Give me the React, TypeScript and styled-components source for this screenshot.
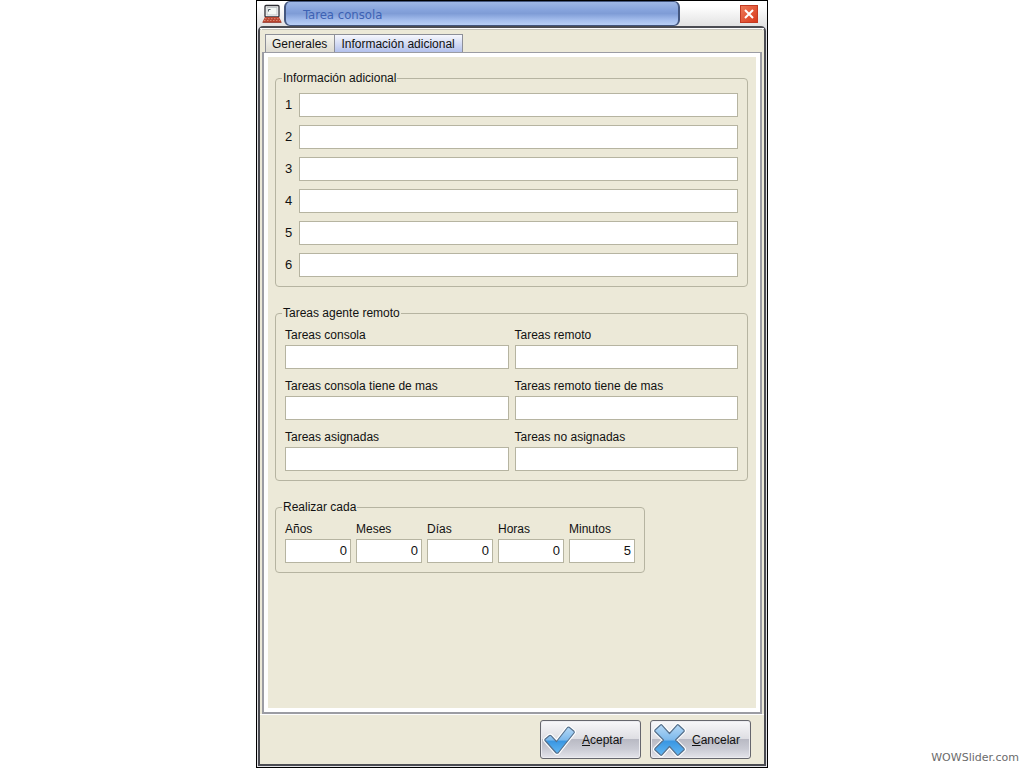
import React, { useState } from 'react';
import styled, { createGlobalStyle } from 'styled-components';

const GlobalStyle = createGlobalStyle`
  *, *::before, *::after { box-sizing: border-box; }
  body {
    margin: 0;
    background: #fff;
    color: #111;
    font: 12px/14px "Liberation Sans", Arial, sans-serif;
  }
  button, input { font: inherit; color: inherit; }
`;

const face = '#ece9d8';
const line = '#b6b4a1';

const Page = styled.div`
  display: grid;
  grid-template-columns: 1fr minmax(512px, 2fr) 1fr;
  min-height: 100vh;
`;

const Dialog = styled.main`
  grid-column: 2;
  display: flex;
  flex-direction: column;
  border: 1px solid #000;
  background: #e2e2e6;
`;

const TitleBar = styled.header`
  display: flex;
  align-items: center;
  height: 25px;
  padding: 0 9px 0 5px;
  background: linear-gradient(#fff 20%, #e2e2e2);
`;

const TitlePill = styled.h1`
  flex: 1;
  height: 25px;
  margin: 0 60px 0 2px;
  padding: 0 17px;
  border: 1px solid #44577f;
  border-width: 1px 2px;
  border-radius: 6px;
  background: linear-gradient(#9fb8e6, #86a3dc 35%, #7f9cd6 50%, #a6bfee 80%, #b9cff6);
  color: #3d62b4;
  font: 500 13px/26px "DejaVu Sans Condensed", "DejaVu Sans", sans-serif;
`;

const CloseButton = styled.button`
  display: flex;
  width: 18px;
  height: 18px;
  padding: 0;
  border: 1px solid #c23a22;
  background: linear-gradient(135deg, #ee7a58, #d8391c);
`;

const Body = styled.div`
  flex: 1;
  display: flex;
  flex-direction: column;
  margin: 0 1px 1px;
  border: 2px solid #4b4c52;
  border-radius: 5px 5px 0 0;
  background: ${face};
  box-shadow: inset 0 1px #fff;
`;

const TabArea = styled.div`
  flex: 1;
  display: flex;
  flex-direction: column;
  padding: 0 2px;
  border: solid #fdfdfd;
  border-width: 1px 0;
`;

const TabList = styled.div`
  display: flex;
  padding: 4px 3px 0;
  border-top: 1px solid #c4c2b8;
`;

const Tab = styled.button`
  height: 18px;
  padding: 0 7px 0 6px;
  border: 1px solid #8d8f98;
  border-bottom: 0;
  background: linear-gradient(#f6f5ee, #dddbd2);
  line-height: 18px;
  & + & { border-left: 0; }
  &[aria-selected='true'] {
    background: linear-gradient(#f6f7fd, #d5dcf4 50%, #b3c1ec);
  }
`;

const TabPanel = styled.section`
  flex: 1;
  border: solid #9b9ca3;
  border-width: 1px 2px 2px;
  background: #fff;
  padding: 4px;
  display: flex;
`;

const PanelFace = styled.div`
  flex: 1;
  display: flex;
  flex-direction: column;
  gap: 19px;
  padding: 14px 8px 20px 7px;
  background: ${face};
`;

const Group = styled.fieldset<{ $fit?: boolean }>`
  min-width: 0;
  margin: 0;
  align-self: ${p => (p.$fit ? 'flex-start' : 'stretch')};
  padding: 8px 9px 9px;
  border: 1px solid ${line};
  border-radius: 4px;
`;

const GroupTitle = styled.legend`
  margin-left: -3px;
  padding: 0 1px;
`;

const NumberedList = styled.div`
  display: grid;
  gap: 8px;
`;

const NumberedRow = styled.label`
  display: grid;
  grid-template-columns: 14px 1fr;
  align-items: center;
  font-size: 13px;
`;

const PairGrid = styled.div`
  display: grid;
  grid-template-columns: 1fr 1fr;
  gap: 10px 6px;
`;

const PeriodRow = styled.div`
  display: grid;
  grid-template-columns: repeat(5, 66px);
  gap: 5px;
`;

const Field = styled.label`
  display: grid;
  gap: 3px;
`;

const TextBox = styled.input<{ $numeric?: boolean }>`
  width: 100%;
  min-width: 0;
  height: 24px;
  padding: ${p => (p.$numeric ? '0 3px 2px' : '0 3px')};
  border: 1px solid ${line};
  border-radius: 0;
  background: #fff;
  font-size: 13px;
  text-align: ${p => (p.$numeric ? 'right' : 'left')};
`;

const Footer = styled.footer`
  display: flex;
  justify-content: flex-end;
  gap: 9px;
  padding: 5px 13px 5px 0;
`;

const ActionButton = styled.button`
  display: flex;
  align-items: center;
  gap: 6px;
  width: 101px;
  height: 39px;
  padding: 0 2px;
  border: 1px solid #65666d;
  border-radius: 3px;
  background: linear-gradient(#f8f8fa, #dedee3 48%, #b9bac4 50%, #c9cad3 75%, #e4e4ea);
  box-shadow: inset 0 0 0 1px #ececf0;
`;

const Credit = styled.p`
  align-self: end;
  justify-self: end;
  margin: 0 5px 3px 0;
  color: #6b6b6b;
  font: 11px/14px "DejaVu Sans", sans-serif;
`;

const ConsoleIcon = () => (
  <svg width="20" height="20" viewBox="0 0 20 20" aria-hidden="true">
    <rect x="3" y="1.500" width="14" height="11.500" rx="1" fill="#fff" stroke="#2d2d33" strokeWidth="1.3" />
    <rect x="5" y="3.500" width="10" height="7.500" fill="#f4f8f4" stroke="#b4babf" strokeWidth=".8" />
    <path d="M6.500 7.500v-2h2" fill="none" stroke="#3d4a58" strokeWidth=".9" />
    <path d="M3 13h14l2.500 5H.5z" fill="#b8452f" />
    <path d="M3 14.700h14M2 16.500h16" stroke="#e8a898" strokeWidth=".7" strokeDasharray="1.500 1.500" />
    <path d="M.5 18.500h19" stroke="#8f2a20" strokeWidth=".8" />
  </svg>
);

const CloseIcon = () => (
  <svg width="16" height="16" viewBox="0 0 16 16" aria-hidden="true">
    <path d="M4 4l8 8M12 4l-8 8" stroke="#fff" strokeWidth="2" />
  </svg>
);

const IconFill = ({ id }: { id: string }) => (
  <defs>
    <linearGradient id={id} x1="0" y1="0" x2="0" y2="1">
      <stop offset="0" stopColor="#b5d8f5" />
      <stop offset=".48" stopColor="#7fbaec" />
      <stop offset=".55" stopColor="#3a97e2" />
      <stop offset="1" stopColor="#62b6f2" />
    </linearGradient>
  </defs>
);

const CHECK = 'M2 17.500Q1.500 17 2 16.300L6.500 12.500Q7.300 12 8 12.700L13.500 18.500L24.500 4.500Q25.300 3.700 26.200 4.300L31 8.300Q31.700 9 31 10L15.500 29.500Q14 31 12.700 29.500Z';
const CROSS = 'M7.500 2Q8.300 1.400 9 2.200L16.500 10.500L24 2.200Q24.700 1.400 25.500 2L31 7Q31.600 7.800 31 8.500L22.500 17L31 25.500Q31.600 26.300 31 27L25.500 32Q24.700 32.600 24 31.800L16.500 23.500L9 31.800Q8.300 32.600 7.500 32L2 27Q1.400 26.300 2 25.500L10.500 17L2 8.500Q1.400 7.800 2 7Z';

const ActionIcon = ({ id, shape }: { id: string; shape: string }) => (
  <svg width="33" height="34" viewBox="0 0 33 34" aria-hidden="true">
    <IconFill id={id} />
    <path d={shape} fill="#fff" stroke="#fff" strokeWidth="3.500" strokeLinejoin="round" />
    <path d={shape} fill={`url(#${id})`} stroke="#56708c" strokeWidth="1.2" strokeLinejoin="round" />
  </svg>
);

const numbered = [1, 2, 3, 4, 5, 6];

const agentFields = [
  'Tareas consola',
  'Tareas remoto',
  'Tareas consola tiene de mas',
  'Tareas remoto tiene de mas',
  'Tareas asignadas',
  'Tareas no asignadas',
];

const periods = [
  { label: 'Años', value: '0' },
  { label: 'Meses', value: '0' },
  { label: 'Días', value: '0' },
  { label: 'Horas', value: '0' },
  { label: 'Minutos', value: '5' },
];

const tabs = ['Generales', 'Información adicional'];

export default function App() {
  const [active, setActive] = useState(1);

  return (
    <Page>
      <GlobalStyle />
      <Dialog>
        <TitleBar>
          <ConsoleIcon />
          <TitlePill>Tarea consola</TitlePill>
          <CloseButton type="button" aria-label="Cerrar"><CloseIcon /></CloseButton>
        </TitleBar>
        <Body>
          <TabArea>
            <TabList role="tablist">
              {tabs.map((name, i) => (
                <Tab key={name} type="button" role="tab" aria-selected={i === active} onClick={() => setActive(i)}>
                  {name}
                </Tab>
              ))}
            </TabList>
            <TabPanel role="tabpanel">
              <PanelFace>
                {active === 1 && (
                  <>
                    <Group>
                      <GroupTitle>Información adicional</GroupTitle>
                      <NumberedList>
                        {numbered.map(n => (
                          <NumberedRow key={n}>
                            {n}
                            <TextBox type="text" />
                          </NumberedRow>
                        ))}
                      </NumberedList>
                    </Group>
                    <Group>
                      <GroupTitle>Tareas agente remoto</GroupTitle>
                      <PairGrid>
                        {agentFields.map(name => (
                          <Field key={name}>
                            {name}
                            <TextBox type="text" />
                          </Field>
                        ))}
                      </PairGrid>
                    </Group>
                    <Group $fit>
                      <GroupTitle>Realizar cada</GroupTitle>
                      <PeriodRow>
                        {periods.map(p => (
                          <Field key={p.label}>
                            {p.label}
                            <TextBox type="text" inputMode="numeric" defaultValue={p.value} $numeric />
                          </Field>
                        ))}
                      </PeriodRow>
                    </Group>
                  </>
                )}
              </PanelFace>
            </TabPanel>
          </TabArea>
          <Footer>
            <ActionButton type="button">
              <ActionIcon id="accept" shape={CHECK} />
              <span><u>A</u>ceptar</span>
            </ActionButton>
            <ActionButton type="button">
              <ActionIcon id="cancel" shape={CROSS} />
              <span><u>C</u>ancelar</span>
            </ActionButton>
          </Footer>
        </Body>
      </Dialog>
      <Credit>WOWSlider.com</Credit>
    </Page>
  );
}
